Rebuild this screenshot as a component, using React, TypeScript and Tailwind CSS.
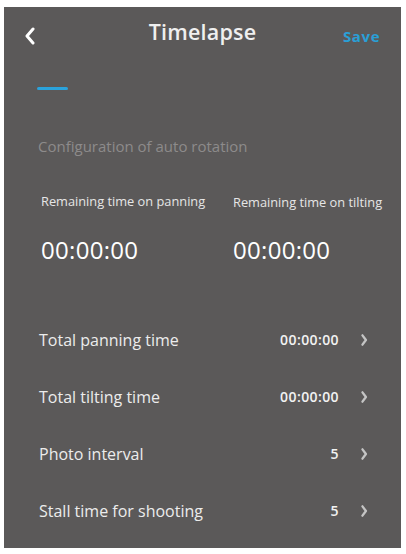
const rows = [
  { label: "Total panning time", value: "00:00:00" },
  { label: "Total tilting time", value: "00:00:00" },
  { label: "Photo interval", value: "5" },
  { label: "Stall time for shooting", value: "5" },
];

function Chevron({ dir, className }: { dir: "left" | "right"; className?: string }) {
  return (
    <svg viewBox="0 0 10 18" className={className} fill="none" stroke="currentColor" strokeLinecap="round" strokeLinejoin="round">
      {dir === "left" ? <path d="M8 2 L2 9 L8 16" strokeWidth={3} /> : <path d="M3 3 L7.5 9 L3 15" strokeWidth={3} />}
    </svg>
  );
}

export default function App() {
  return (
    <div className="w-[406px] h-[554px] bg-white pt-[7px] pl-[4px] pr-[5px] pb-[6px] font-['Open_Sans',sans-serif]">
      <div className="h-full bg-[#5b5959] flex flex-col text-[#efefef]">
        {/* header */}
        <div className="relative h-[56px] flex items-center justify-center">
          <Chevron dir="left" className="absolute left-[21px] top-[20px] w-[10px] h-[18px] text-white" />
          <span className="text-[21.5px] font-semibold tracking-[0.2px] -mt-[6px]">Timelapse</span>
          <span className="absolute left-[339px] top-[18px] text-[15px] font-bold tracking-[0.6px] text-[#2a9fd6]">Save</span>
        </div>

        <div className="ml-[33px] mt-[24px] w-[31px] h-[3px] bg-[#2ba3dc] rounded-full" />

        <div className="ml-[34px] mt-[46px] text-[15px] leading-[20px] text-[#8d8b8b]">Configuration of auto rotation</div>

        <div className="mt-[37px] flex pl-[37px]">
          <div className="w-[192px]">
            <div className="text-[12.8px] leading-[16px] text-[#e6e6e6]">Remaining time on panning</div>
            <div className="mt-[26px] text-[24px] leading-[30px] tracking-[0.3px] text-white">00:00:00</div>
          </div>
          <div>
            <div className="text-[12.8px] leading-[16px] text-[#e6e6e6] mt-[1px]">Remaining time on tilting</div>
            <div className="mt-[25px] text-[24px] leading-[30px] tracking-[0.3px] text-white">00:00:00</div>
          </div>
        </div>

        <div className="mt-[46px] flex flex-col">
          {rows.map((r) => (
            <div key={r.label} className="h-[57px] flex items-center pl-[35px] pr-[33px]">
              <span className="flex-1 text-[16px] text-[#ececec]">{r.label}</span>
              <span className="text-[14px] font-semibold tracking-[0.4px] text-[#f2f2f2]">{r.value}</span>
              <Chevron dir="right" className="ml-[21px] w-[8px] h-[14px] text-[#c4c4c4]" />
            </div>
          ))}
        </div>
      </div>
    </div>
  );
}
